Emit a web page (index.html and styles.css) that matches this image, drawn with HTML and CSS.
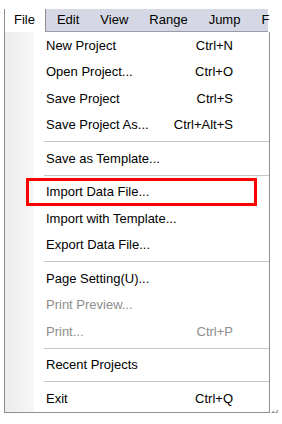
FILE: index.html
```html
<!DOCTYPE html>
<html lang="en">
<head>
  <meta charset="UTF-8" />
  <title>File menu</title>
  <link rel="stylesheet" href="styles.css">
</head>
<body>

  <div class="shot">
    <div class="menubar">
      <span class="tab active">File</span>
      <span class="tab">Edit</span>
      <span class="tab">View</span>
      <span class="tab">Range</span>
      <span class="tab">Jump</span>
      <span class="tab">F</span>
    </div>

    <div class="wrap">
      <ul class="menu">
        <li class="item"><span>New Project</span><span class="key">Ctrl+N</span></li>
        <li class="item"><span>Open Project...</span><span class="key">Ctrl+O</span></li>
        <li class="item"><span>Save Project</span><span class="key">Ctrl+S</span></li>
        <li class="item"><span>Save Project As...</span><span class="key">Ctrl+Alt+S</span></li>
        <li class="sep"></li>
        <li class="item"><span>Save as Template...</span></li>
        <li class="sep"></li>
        <li class="item marked"><span>Import Data File...</span><span class="mark"></span></li>
        <li class="item"><span>Import with Template...</span></li>
        <li class="item"><span>Export Data File...</span></li>
        <li class="sep"></li>
        <li class="item"><span>Page Setting(U)...</span></li>
        <li class="item disabled"><span>Print Preview...</span></li>
        <li class="item disabled"><span>Print...</span><span class="key">Ctrl+P</span></li>
        <li class="sep"></li>
        <li class="item"><span>Recent Projects</span></li>
        <li class="sep"></li>
        <li class="item"><span>Exit</span><span class="key">Ctrl+Q</span></li>
      </ul>
      <span class="para">&#8629;</span>
    </div>
  </div>

</body>
</html>
```

FILE: styles.css
```css
body {
  margin: 0;
  background: #fff;
  font-family: 'Liberation Sans', Arial, sans-serif;
  font-size: 13px;
  color: #000;
}
.shot {
  padding: 9px 0 0 4px;
}
.menubar {
  display: flex;
  align-items: center;
  width: 264px;
  height: 22px;
  background: #d5d8e4;
  border-bottom: 1px solid #9a9ca6;
  gap: 21px;
}
.tab {
  line-height: 22px;
  white-space: nowrap;
}
.tab.active {
  background: #fff;
  border-left: 1px solid #8e8e8e;
  border-right: 1px solid #8e8e8e;
  padding: 0 10px 0 9px;
  height: 23px;
  margin-bottom: -1px;
  margin-right: -10px;
}
.wrap {
  display: flex;
  align-items: flex-end;
}
.menu {
  list-style: none;
  margin: 0;
  padding: 0;
  width: 264px;
  border: 1px solid #8e8e8e;
  border-top: none;
  background: linear-gradient(to right, #ececec 0, #f6f6f6 28px, #fff 29px);
}
.item {
  position: relative;
  display: flex;
  justify-content: space-between;
  align-items: center;
  height: 26.5px;
  padding: 0 36px 0 41px;
}
.key {
  text-align: right;
}
.disabled {
  color: #8d8d8d;
}
.sep {
  height: 7px;
  margin-left: 39px;
  display: flex;
  align-items: center;
}
.sep::before {
  content: "";
  flex: 1;
  height: 1px;
  background: #c6c6c6;
}
.mark {
  position: absolute;
  left: 21px;
  top: -1px;
  width: 231px;
  height: 28px;
  box-sizing: border-box;
  border: 3px solid #f00;
}
.para {
  font-size: 10px;
  color: #777;
  margin-left: 1px;
  margin-bottom: -5px;
}
```
